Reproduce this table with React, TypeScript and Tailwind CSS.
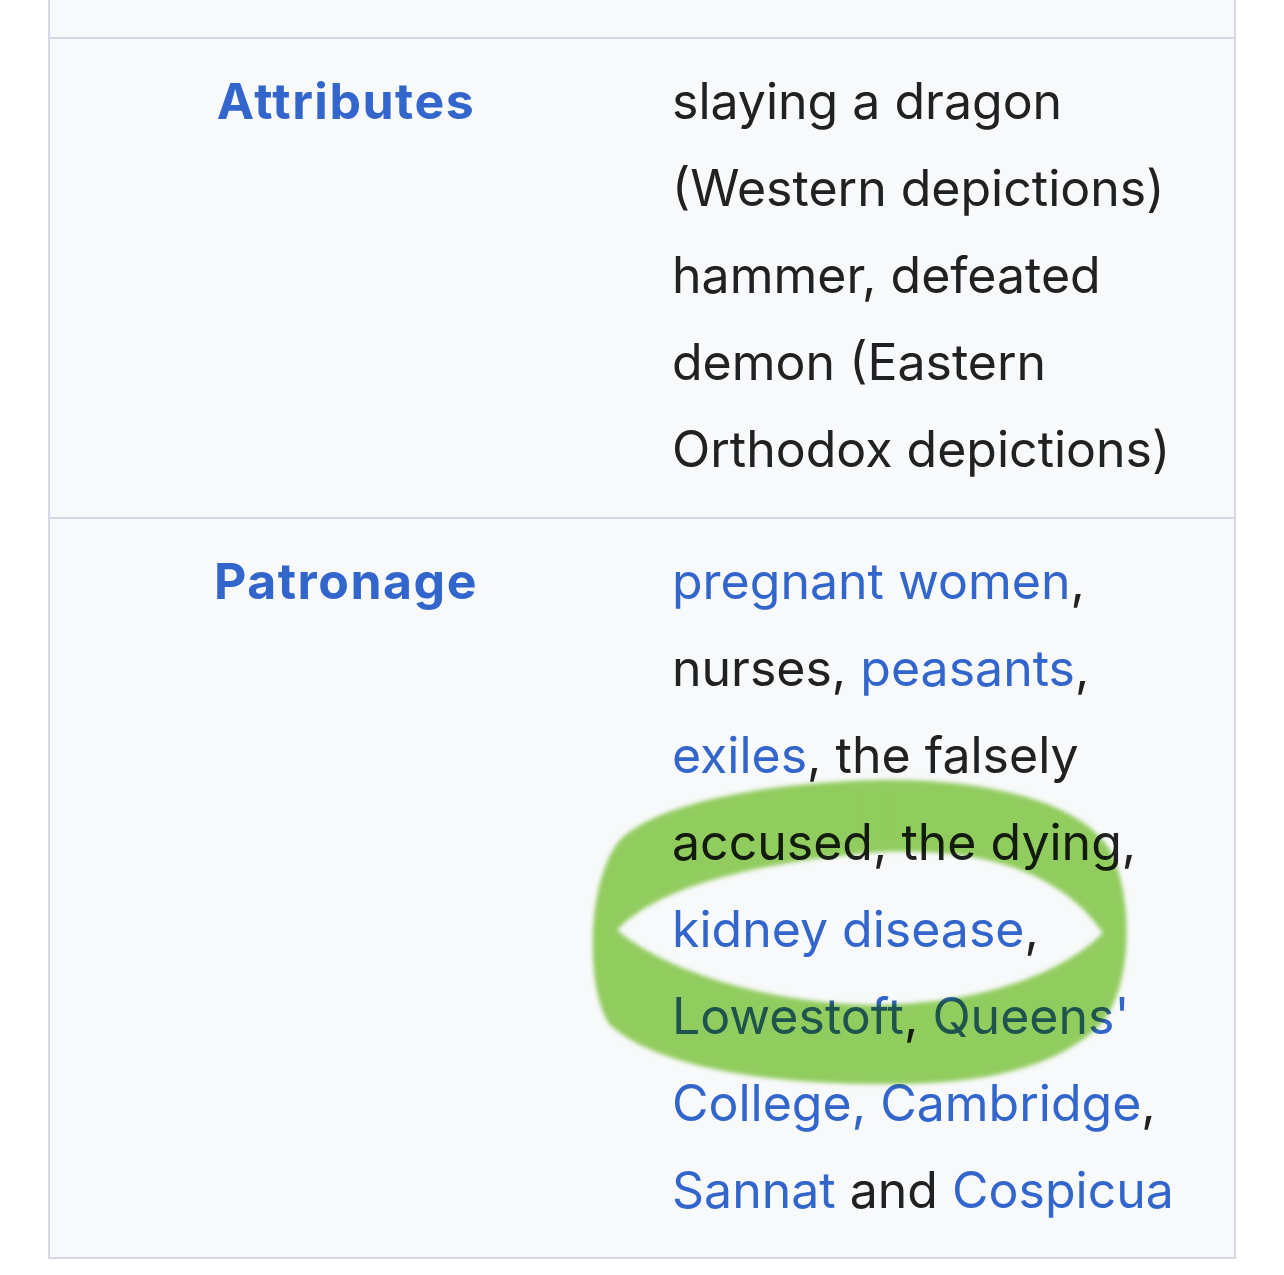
import React from 'react';

const linkCls = 'text-[#3366cc]';

// hand-drawn marker ring over "kidney disease"
const Highlight: React.FC = () => (
    <svg className="absolute left-0 top-0 pointer-events-none mix-blend-multiply" width="1284" height="1275" viewBox="0 0 1284 1275">
        <defs>
            <filter id="soft" x="-10%" y="-10%" width="120%" height="120%">
                <feGaussianBlur stdDeviation="2" />
            </filter>
        </defs>
        <path
            fillRule="evenodd"
            fill="#95d160"
            filter="url(#soft)"
            d="M 880 780 C 980 778 1080 800 1110 850 C 1135 900 1132 990 1100 1025 C 1050 1075 960 1085 880 1084 C 780 1084 660 1070 610 1025 C 585 990 586 880 620 840 C 660 800 780 782 880 780 Z
               M 617 930 C 660 885 760 862 880 852 C 980 848 1060 870 1103 933 C 1060 975 980 1003 880 1005 C 780 1005 670 975 617 930 Z"
        />
        <rect x="862" y="782" width="24" height="68" fill="#95d160" opacity="0.12" filter="url(#soft)" />
    </svg>
);

export default function App() {
    return (
        <div className="relative w-[1284px] h-[1275px] bg-white overflow-hidden" style={{ fontFamily: 'Inter, "Liberation Sans", sans-serif' }}>
            <div className="ml-[48px] w-[1188px] border-x-2 border-b-2 border-[#d6d8e4] bg-[#f8f9fa] text-[#202122] text-[50px] leading-[87px]">
                {/* tail of the previous row */}
                <div className="h-[39px] border-b-2 border-[#d6d8e4]" />

                {/* Attributes */}
                <div className="grid grid-cols-[592px_1fr] pt-[19px] pb-[24px] border-b-2 border-[#d6d8e4]">
                    <div className={`text-center font-bold tracking-[0.03em] ${linkCls}`}>Attributes</div>
                    <div className="pl-[30px]">
                        slaying a dragon<br />
                        (Western depictions)<br />
                        hammer, defeated<br />
                        demon (Eastern<br />
                        Orthodox depictions)
                    </div>
                </div>

                {/* Patronage */}
                <div className="grid grid-cols-[592px_1fr] pt-[19px] pb-[23px]">
                    <div className={`text-center font-bold tracking-[0.03em] ${linkCls}`}>Patronage</div>
                    <div className="pl-[30px]">
                        <span className={linkCls}>pregnant women</span>,<br />
                        nurses, <span className={linkCls}>peasants</span>,<br />
                        <span className={linkCls}>exiles</span>, the falsely<br />
                        accused, the dying,<br />
                        <span className={linkCls}>kidney disease</span>,<br />
                        <span className={linkCls}>Lowestoft</span>, <span className={linkCls}>Queens'</span><br />
                        <span className={linkCls}>College, Cambridge</span>,<br />
                        <span className={linkCls}>Sannat</span> and <span className={linkCls}>Cospicua</span>
                    </div>
                </div>
            </div>
            <Highlight />
        </div>
    );
}
